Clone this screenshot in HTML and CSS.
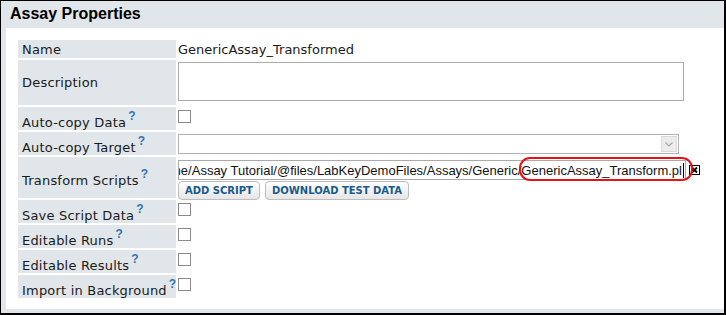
FILE: index.html
```html
<!DOCTYPE html>
<html>
<head>
<meta charset="utf-8">
<link rel="stylesheet" href="styles.css">
</head>
<body>
<div class="panel">
  <div class="panel-title">Assay Properties</div>
  <div class="panel-body">
    <div class="props">
      <div class="lbl mid"><span>Name</span></div>
      <div class="val mid">GenericAssay_Transformed</div>

      <div class="lbl mid"><span>Description</span></div>
      <div class="val"><textarea class="ta"></textarea></div>

      <div class="lbl"><span>Auto-copy Data<span class="help">?</span></span></div>
      <div class="val"><input type="checkbox" class="cb"></div>

      <div class="lbl"><span>Auto-copy Target<span class="help">?</span></span></div>
      <div class="val">
        <div class="select">
          <span class="arrow"><svg width="8" height="5" viewBox="0 0 8 5"><polyline points="0.5,0.5 4,4 7.5,0.5" fill="none" stroke="#a8a8a8" stroke-width="1.2"/></svg></span>
        </div>
      </div>

      <div class="lbl mid"><span>Transform Scripts<span class="help">?</span></span></div>
      <div class="val">
        <div class="file-row">
          <div class="path"><span class="path-text">/labkey/_webdav/home/Assay Tutorial/@files/LabKeyDemoFiles/Assays/Generic/GenericAssay_Transform.pl</span><span class="caret"></span></div>
          <svg class="del" width="11" height="10" viewBox="0 0 11 10"><rect x="0.5" y="0.5" width="10" height="9" fill="#fff" stroke="#000"/><path d="M3 2.5 L8 7.5 M8 2.5 L3 7.5" stroke="#000" stroke-width="1.8"/></svg>
          <div class="mark"></div>
        </div>
        <div class="btns">
          <span class="btn">ADD SCRIPT</span>
          <span class="btn">DOWNLOAD TEST DATA</span>
        </div>
      </div>

      <div class="lbl"><span>Save Script Data<span class="help">?</span></span></div>
      <div class="val"><input type="checkbox" class="cb"></div>

      <div class="lbl"><span>Editable Runs<span class="help">?</span></span></div>
      <div class="val"><input type="checkbox" class="cb"></div>

      <div class="lbl"><span>Editable Results<span class="help">?</span></span></div>
      <div class="val"><input type="checkbox" class="cb"></div>

      <div class="lbl"><span>Import in Background<span class="help">?</span></span></div>
      <div class="val"><input type="checkbox" class="cb"></div>
    </div>
  </div>
</div>
</body>
</html>
```

FILE: styles.css
```css
html, body {
  margin: 0;
  padding: 0;
  background: #fff;
}

.panel {
  width: 726px;
  height: 315px;
  box-sizing: border-box;
  border: 1px solid #000;
  border-right-width: 2px;
  border-bottom-width: 2px;
  background: #e1e6ea;
  display: flex;
  flex-direction: column;
}

.panel-title {
  height: 27px;
  line-height: 25px;
  padding-left: 9px;
  font-family: "Liberation Sans", Arial, sans-serif;
  font-weight: bold;
  font-size: 16px;
  color: #000;
}

.panel-body {
  flex: 1;
  margin-left: 5px;
  margin-bottom: 4px;
  background: #fff;
  padding: 12px 0 0 12px;
}

.props {
  display: grid;
  grid-template-columns: 158px 1fr;
  grid-template-rows: 18px 45px 23px 23px 41px 23px 23px 23px 23px;
  gap: 2px;
  font-family: "DejaVu Sans", Verdana, sans-serif;
  font-size: 13px;
  color: #1a1a1a;
}

.lbl {
  background: #e1e6ea;
  padding-left: 4px;
  display: flex;
  align-items: flex-end;
  white-space: nowrap;
  line-height: 15px;
  letter-spacing: 0.2px;
}

.lbl.mid {
  align-items: center;
}

.val {
  display: flex;
  flex-direction: column;
  align-items: flex-start;
}

.val.mid {
  justify-content: center;
}

.help {
  font-family: "Liberation Sans", Arial, sans-serif;
  font-weight: bold;
  font-size: 12px;
  color: #3274b0;
  vertical-align: 7px;
  line-height: 1;
  margin-left: 2px;
  letter-spacing: 0;
}

.ta {
  display: block;
  box-sizing: border-box;
  width: 506px;
  height: 39px;
  margin: 2px 0 0 0;
  border: 1px solid #aaa;
  resize: none;
  padding: 0;
  background: #fff;
}

.cb {
  appearance: none;
  -webkit-appearance: none;
  box-sizing: border-box;
  width: 13px;
  height: 13px;
  margin: 3px 0 0 0;
  border: 1px solid #8a8a8a;
  background: #fff;
  border-radius: 0;
}

.select {
  box-sizing: border-box;
  width: 501px;
  height: 20px;
  margin-top: 2px;
  border: 1px solid #b4b4b4;
  background: #fff;
  display: flex;
  justify-content: flex-end;
  align-items: center;
  padding-right: 1px;
}

.arrow {
  box-sizing: border-box;
  width: 16px;
  height: 16px;
  background: #ececec;
  border: 1px solid #dadada;
  display: flex;
  align-items: center;
  justify-content: center;
}

.file-row {
  position: relative;
  display: flex;
  align-items: center;
  margin-top: 3px;
}

.path {
  box-sizing: border-box;
  width: 508px;
  height: 20px;
  border: 1px solid #aaa;
  overflow: hidden;
  display: flex;
  justify-content: flex-end;
  align-items: center;
  padding-right: 1px;
  font-family: "Liberation Sans", Arial, sans-serif;
  font-size: 13px;
  color: #111;
  white-space: nowrap;
}

.path-text {
  flex: none;
}

.caret {
  flex: none;
  width: 1px;
  height: 15px;
  background: #000;
  margin-left: 1px;
}

.del {
  display: block;
  margin-left: 3px;
}

.mark {
  position: absolute;
  left: 341px;
  top: -3px;
  width: 174px;
  height: 24px;
  box-sizing: border-box;
  border: 2px solid #e3131b;
  border-radius: 11px;
}

.btns {
  display: flex;
  gap: 5px;
  margin-top: 1px;
}

.btn {
  box-sizing: border-box;
  height: 19px;
  padding: 0 6px;
  display: flex;
  align-items: center;
  border: 1px solid #bdbdbd;
  border-radius: 4px;
  background: linear-gradient(#ffffff, #e6e6e6);
  font-family: "DejaVu Sans", Verdana, sans-serif;
  font-weight: bold;
  font-size: 10px;
  color: #1a5a8c;
  white-space: nowrap;
}
```
